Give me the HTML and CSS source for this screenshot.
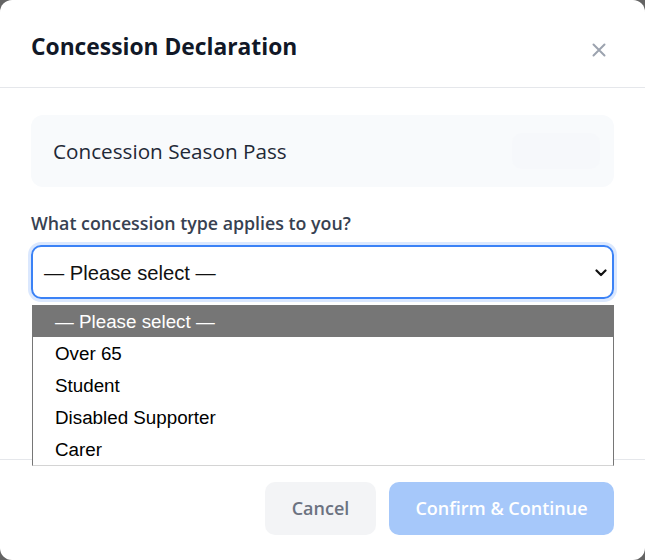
FILE: index.html
```html
<!DOCTYPE html>
<html lang="en">
<head>
<meta charset="utf-8">
<title>Concession Declaration</title>
<link rel="stylesheet" href="styles.css">
</head>
<body>
<div class="modal">
  <header class="modal-header">
    <h2 class="title">Concession Declaration</h2>
    <button class="close" aria-label="Close">
      <svg width="14" height="14" viewBox="0 0 14 14"><path d="M1.5 1.5 L12.5 12.5 M12.5 1.5 L1.5 12.5" stroke="#9ca3af" stroke-width="2" stroke-linecap="round"/></svg>
    </button>
  </header>
  <main class="modal-body">
    <div class="product-card">
      <span class="product-name">Concession Season Pass</span>
      <span class="product-badge"></span>
    </div>
    <label class="field-label">What concession type applies to you?</label>
    <div class="select-wrap">
      <div class="select">
        <span>— Please select —</span>
        <svg class="chev" width="12" height="8" viewBox="0 0 12 8"><path d="M1.5 1.5 L6 6 L10.5 1.5" fill="none" stroke="#111" stroke-width="2.2" stroke-linecap="round" stroke-linejoin="round"/></svg>
      </div>
      <ul class="options">
        <li class="opt active">— Please select —</li>
        <li class="opt">Over 65</li>
        <li class="opt">Student</li>
        <li class="opt">Disabled Supporter</li>
        <li class="opt">Carer</li>
      </ul>
    </div>
  </main>
  <footer class="modal-footer">
    <button class="btn btn-cancel">Cancel</button>
    <button class="btn btn-confirm">Confirm &amp; Continue</button>
  </footer>
</div>
</body>
</html>
```
FILE: styles.css
```css
* { box-sizing: border-box; }
html, body { margin: 0; padding: 0; }
body {
  width: 645px;
  height: 560px;
  background: #646464;
  font-family: "Open Sans", "Noto Sans", sans-serif;
  overflow: hidden;
}
.modal {
  width: 645px;
  height: 560px;
  background: #ffffff;
  border-radius: 12px;
  display: flex;
  flex-direction: column;
}
.modal-header {
  height: 88px;
  border-bottom: 1px solid #e5e7eb;
  display: flex;
  align-items: center;
  justify-content: space-between;
  padding: 0 39px 0 31px;
}
.title {
  margin: 0;
  font-size: 22.8px;
  font-weight: 700;
  color: #111827;
  position: relative;
  top: 3px;
}
.close {
  border: 0;
  background: transparent;
  padding: 0;
  display: flex;
  position: relative;
  top: 6px;
}
.modal-body {
  flex: 1;
  padding: 27px 31px 0 31px;
}
.product-card {
  height: 72px;
  background: #f8fafc;
  border-radius: 12px;
  display: flex;
  align-items: center;
  justify-content: space-between;
  padding: 0 14px 0 22px;
}
.product-name {
  font-size: 20.7px;
  font-weight: 500;
  color: #1f2937;
}
.product-badge {
  width: 88px;
  height: 36px;
  border-radius: 10px;
  background: #f6f8fb;
}
.field-label {
  display: block;
  margin-top: 22px;
  font-size: 17.8px;
  font-weight: 600;
  color: #374151;
  line-height: 28px;
}
.select-wrap {
  position: relative;
  margin-top: 8px;
}
.select {
  height: 54px;
  border: 2px solid #3b82f6;
  border-radius: 10px;
  box-shadow: 0 0 0 3px #dbe8fe;
  display: flex;
  align-items: center;
  justify-content: space-between;
  padding: 2px 5px 0 11px;
  font-family: "Liberation Sans", Arial, sans-serif;
  font-size: 20.2px;
  color: #111;
}
.options {
  position: absolute;
  top: 60px;
  left: 1px;
  right: 0;
  margin: 0;
  padding: 0;
  list-style: none;
  background: #fff;
  border: 1px solid #767676;
  border-top: 0;
  border-bottom: 1px solid #d4d4d4;
  font-family: "Liberation Sans", Arial, sans-serif;
  font-size: 18.8px;
  color: #000;
}
.opt {
  height: 32px;
  line-height: 34px;
  padding-left: 22px;
}
.opt.active {
  background: #767676;
  color: #fff;
}
.modal-footer {
  height: 101px;
  border-top: 1px solid #e5e7eb;
  display: flex;
  justify-content: flex-end;
  align-items: flex-start;
  gap: 13px;
  padding: 22px 31px 0 0;
}
.btn {
  height: 53px;
  border: 0;
  border-radius: 10px;
  font-family: "Open Sans", "Noto Sans", sans-serif;
  font-size: 18px;
  font-weight: 600;
  padding: 0 0 2px 0;
}
.btn-cancel {
  width: 111px;
  background: #f3f4f6;
  color: #6b7280;
}
.btn-confirm {
  width: 225px;
  background: #a6c8fa;
  color: #ffffff;
}
```
